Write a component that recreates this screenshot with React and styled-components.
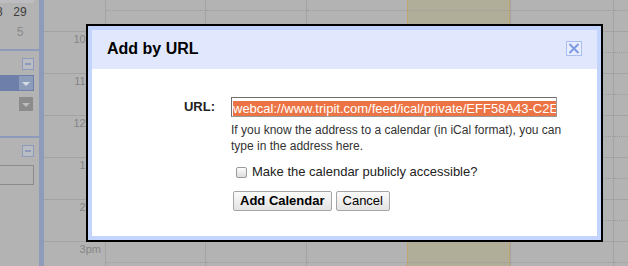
import React from "react";
import styled, { createGlobalStyle } from "styled-components";

const GlobalStyle = createGlobalStyle`
  html, body {
    margin: 0;
    padding: 0;
  }
  body {
    font-family: "Liberation Sans", Arial, sans-serif;
    background: #b3b3b3;
  }
`;

const Page = styled.div`
  position: relative;
  display: flex;
  width: 628px;
  height: 266px;
  overflow: hidden;
  background: #b3b3b3;
`;

/* ---------- left sidebar (dimmed) ---------- */

const Sidebar = styled.div`
  width: 39px;
  flex-shrink: 0;
  display: flex;
  flex-direction: column;
`;

const TopStrip = styled.div`
  width: 34px;
  height: 3px;
  background: #bdbdc1;
`;

const MiniRow = styled.div`
  display: flex;
  justify-content: flex-end;
  width: 34px;
  height: 20px;
  padding: 2px 2px 0 0;
  box-sizing: border-box;
  font-size: 12px;
  line-height: 14px;
  color: ${({ $dim }) => ($dim ? "#8a8a8a" : "#3c3c3c")};
`;

const MiniDay = styled.span`
  width: 24px;
  flex-shrink: 0;
  text-align: center;
`;

const SectionRule = styled.div`
  height: 2px;
  margin-top: ${({ $top }) => $top}px;
  background: #8e9ab9;
`;

const MinusBox = styled.div`
  width: 12px;
  height: 12px;
  box-sizing: border-box;
  margin: 7px 0 0 22px;
  border: 1px solid #8e9ab9;
  background: #babcc4;
  display: flex;
  align-items: center;
  justify-content: center;

  &::after {
    content: "";
    width: 6px;
    height: 2px;
    background: #8e9ab9;
  }
`;

const CalRow = styled.div`
  width: 34px;
  height: 16px;
  margin-top: 5px;
  padding: 1px 0 1px 19px;
  box-sizing: border-box;
  background: ${({ $selected }) => ($selected ? "#6e80aa" : "transparent")};
`;

const ArrowBox = styled.div`
  width: 14px;
  height: 14px;
  background: ${({ $blue }) => ($blue ? "#8e9cbc" : "#8b8b8b")};
  display: flex;
  align-items: center;
  justify-content: center;

  &::after {
    content: "";
    border-left: 4px solid transparent;
    border-right: 4px solid transparent;
    border-top: 4px solid ${({ $blue }) => ($blue ? "#d6dbe6" : "#bcbcbc")};
    margin-top: 1px;
  }
`;

const SideInput = styled.div`
  width: 34px;
  height: 20px;
  margin-top: 8px;
  box-sizing: border-box;
  border: 1px solid #8c8c8c;
  border-left: none;
`;

const BlueStrip = styled.div`
  width: 5px;
  flex-shrink: 0;
  background: #8f9bbb;
`;

/* ---------- time grid ---------- */

const TimeColumn = styled.div`
  width: 61px;
  flex-shrink: 0;
  display: flex;
  flex-direction: column;
`;

const Lead = styled.div`
  height: 31px;
  flex-shrink: 0;
`;

const LeadHalf = styled.div`
  height: 10px;
  border-bottom: 1px dotted #9c9c9c;
`;

const TimeSlot = styled.div`
  height: 42px;
  flex-shrink: 0;
  box-sizing: border-box;
  border-top: 1px solid #a3a3a3;
  padding: 1px 4px 0 0;
  text-align: right;
  font-size: 11px;
  line-height: 13px;
  color: #858585;
`;

const DayColumn = styled.div`
  width: ${({ $w }) => ($w ? `${$w}px` : "auto")};
  flex: ${({ $w }) => ($w ? "0 0 auto" : "1 1 auto")};
  box-sizing: border-box;
  display: flex;
  flex-direction: column;
  border-left: 1px solid ${({ $today }) => ($today ? "#bea872" : "#a3a3a3")};
  border-right: ${({ $today }) => ($today ? "1px solid #bea872" : "none")};
  background: ${({ $today }) => ($today ? "#b0ad99" : "transparent")};
`;

const HourCell = styled.div`
  height: 42px;
  flex-shrink: 0;
  box-sizing: border-box;
  border-top: 1px solid #a3a3a3;
`;

const HalfHour = styled.div`
  height: 20px;
  border-bottom: 1px dotted #9c9c9c;
`;

/* ---------- dialog ---------- */

const Dialog = styled.div`
  position: absolute;
  left: 86px;
  top: 24px;
  width: 517px;
  height: 218px;
  box-sizing: border-box;
  border: 2px solid #000;
  padding: 4px;
  background: #c3d4fd;
  display: flex;
  flex-direction: column;
`;

const DialogHeader = styled.div`
  height: 39px;
  flex-shrink: 0;
  display: flex;
  align-items: center;
  justify-content: space-between;
  padding: 0 15px;
  background: #e1e8fe;
`;

const Title = styled.h1`
  margin: 0 0 2px 0;
  font-size: 16px;
  font-weight: bold;
  color: #000;
`;

const CloseButton = styled.button`
  width: 16px;
  height: 15px;
  margin: 0 0 2px 0;
  padding: 0;
  border: 1px solid #a8bdf2;
  background: #e8eeff;
  display: flex;
  align-items: center;
  justify-content: center;
`;

const DialogBody = styled.div`
  flex: 1;
  background: #fff;
  padding-top: 28px;
  display: grid;
  grid-template-columns: 123px 326px;
  column-gap: 16px;
  align-content: start;
`;

const FieldLabel = styled.label`
  grid-column: 1;
  text-align: right;
  font-size: 13px;
  font-weight: bold;
  line-height: 20px;
  color: #222;
`;

const FieldStack = styled.div`
  grid-column: 2;
  display: flex;
  flex-direction: column;
`;

const UrlInput = styled.div`
  width: 326px;
  height: 20px;
  box-sizing: border-box;
  border: 1px solid #6f6f6f;
  border-right-color: #9a9a9a;
  border-bottom-color: #9a9a9a;
  padding: 1px;
  overflow: hidden;
  white-space: nowrap;
  background: #fff;
`;

const Selected = styled.span`
  display: inline-block;
  height: 16px;
  line-height: 16px;
  font-size: 13px;
  color: #fff;
  background: #ec7444;
`;

const Hint = styled.p`
  margin: 5px 0 0 0;
  width: 345px;
  font-size: 12px;
  line-height: 16px;
  color: #333;
`;

const CheckRow = styled.label`
  display: flex;
  align-items: center;
  gap: 5px;
  margin: 10px 0 0 5px;
  font-size: 13px;
  line-height: 16px;
  color: #222;
`;

const CheckBox = styled.span`
  width: 11px;
  height: 11px;
  box-sizing: border-box;
  border: 1px solid #9a9a9a;
  border-radius: 2px;
  background: linear-gradient(#fdfdfd, #dcdcdc);
`;

const ButtonRow = styled.div`
  display: flex;
  gap: 4px;
  margin: 11px 0 0 2px;
`;

const Button = styled.button`
  height: 20px;
  padding: 0 6px;
  border: 1px solid #a5a5a5;
  border-radius: 2px;
  background: linear-gradient(#fbfbfb, #e3e3e3);
  font-family: "Liberation Sans", Arial, sans-serif;
  font-size: 13px;
  font-weight: ${({ $primary }) => ($primary ? "bold" : "normal")};
  color: #000;
  line-height: 18px;
`;

const hours = ["10am", "11am", "12pm", "1pm", "2pm", "3pm"];
const days = [
  { w: 100 },
  { w: 101 },
  { w: 101 },
  { w: 103, today: true },
  { w: 103 },
  { w: 0 },
];

function CloseIcon() {
  return (
    <svg width="12" height="11" viewBox="0 0 12 11">
      <path d="M1.5 1 L10.5 10 M10.5 1 L1.5 10" stroke="#7d9be3" strokeWidth="2" fill="none" />
    </svg>
  );
}

export default function App() {
  return (
    <>
      <GlobalStyle />
      <Page>
        <Sidebar>
          <TopStrip />
          <MiniRow>
            <MiniDay>28</MiniDay>
            <MiniDay>29</MiniDay>
          </MiniRow>
          <MiniRow $dim>
            <MiniDay>4</MiniDay>
            <MiniDay>5</MiniDay>
          </MiniRow>
          <SectionRule $top={6} />
          <MinusBox />
          <CalRow $selected>
            <ArrowBox $blue />
          </CalRow>
          <CalRow>
            <ArrowBox />
          </CalRow>
          <SectionRule $top={24} />
          <MinusBox />
          <SideInput />
        </Sidebar>
        <BlueStrip />
        <TimeColumn>
          <Lead />
          {hours.map((h) => (
            <TimeSlot key={h}>{h}</TimeSlot>
          ))}
        </TimeColumn>
        {days.map((d, i) => (
          <DayColumn key={i} $w={d.w} $today={d.today}>
            <Lead>
              <LeadHalf />
            </Lead>
            {hours.map((h) => (
              <HourCell key={h}>
                <HalfHour />
              </HourCell>
            ))}
          </DayColumn>
        ))}

        <Dialog>
          <DialogHeader>
            <Title>Add by URL</Title>
            <CloseButton aria-label="Close">
              <CloseIcon />
            </CloseButton>
          </DialogHeader>
          <DialogBody>
            <FieldLabel>URL:</FieldLabel>
            <FieldStack>
              <UrlInput>
                <Selected>webcal://www.tripit.com/feed/ical/private/EFF58A43-C2E8-4B1D-9E1F-0A2C</Selected>
              </UrlInput>
              <Hint>
                If you know the address to a calendar (in iCal format), you can type in the address here.
              </Hint>
              <CheckRow>
                <CheckBox />
                Make the calendar publicly accessible?
              </CheckRow>
              <ButtonRow>
                <Button $primary>Add Calendar</Button>
                <Button>Cancel</Button>
              </ButtonRow>
            </FieldStack>
          </DialogBody>
        </Dialog>
      </Page>
    </>
  );
}
